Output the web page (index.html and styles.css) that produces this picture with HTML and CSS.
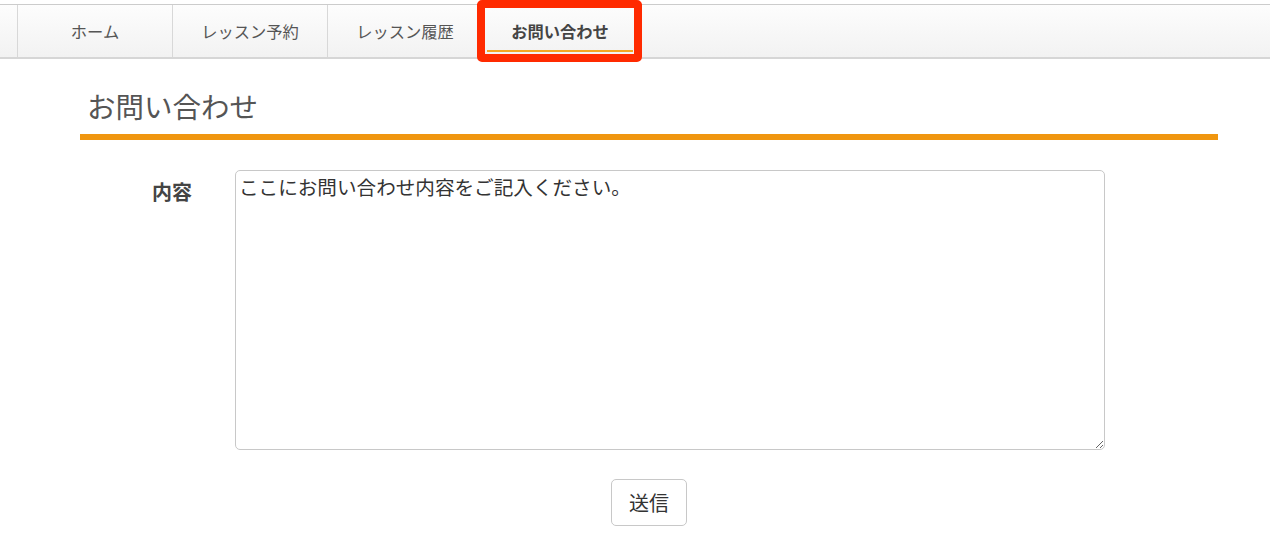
FILE: index.html
```html
<!DOCTYPE html>
<html>
  <head>
    <title>お問い合わせ</title>
    <link rel="stylesheet" href="styles.css">
  </head>
  <body>
    <nav class="nav">
      <ul class="nav-list">
        <li class="nav-item"><a href="#">ホーム</a></li>
        <li class="nav-item"><a href="#">レッスン予約</a></li>
        <li class="nav-item"><a href="#">レッスン履歴</a></li>
        <li class="nav-item active"><a href="#">お問い合わせ</a></li>
      </ul>
    </nav>

    <div class="container">
      <h1 class="page-title">お問い合わせ</h1>

      <form class="contact-form">
        <div class="form-row">
          <label for="content">内容</label>
          <textarea id="content" placeholder="ここにお問い合わせ内容をご記入ください。"></textarea>
        </div>
        <div class="form-actions">
          <button type="submit">送信</button>
        </div>
      </form>
    </div>
  </body>
</html>
```

FILE: styles.css
```css
body {
  margin: 0;
  font-family: "Noto Sans CJK JP", "Liberation Sans", sans-serif;
  color: #555;
  background: #fff;
}
.nav {
  margin-top: 4px;
  height: 52px;
  border-top: 1px solid #ccc;
  border-bottom: 2px solid #d6d6d6;
  background: linear-gradient(#fdfdfd, #f2f2f2);
}
.nav-list {
  list-style: none;
  margin: 0;
  padding: 0 0 0 17px;
  display: flex;
  height: 100%;
}
.nav-item {
  position: relative;
  width: 154px;
  border-left: 1px solid #d8d8d8;
  display: flex;
  align-items: center;
  justify-content: center;
}
.nav-item a {
  color: #555;
  text-decoration: none;
  font-size: 16.3px;
}
.nav-item.active {
  border-left: none;
  width: 146px;
  margin-left: 5px;
}
.nav-item.active a {
  font-weight: bold;
  color: #444;
}
.nav-item.active::before {
  content: "";
  position: absolute;
  left: 0;
  right: 0;
  top: 45px;
  height: 2px;
  background: #f5a623;
}
.nav-item.active::after {
  content: "";
  position: absolute;
  left: -10px;
  right: -9px;
  top: -5px;
  bottom: -5px;
  border: 8px solid #ff2a00;
  border-radius: 5px;
}
.container {
  margin: 0 52px 0 80px;
}
.page-title {
  margin: 0;
  padding: 27px 0 0 7px;
  height: 48px;
  font-size: 28.5px;
  font-weight: normal;
  color: #555;
  border-bottom: 6px solid #f0960f;
  line-height: 40px;
}
.contact-form {
  padding-top: 30px;
}
.form-row {
  display: flex;
  align-items: flex-start;
  padding-left: 72px;
}
.form-row label {
  width: 83px;
  padding-top: 7px;
  font-size: 20px;
  font-weight: bold;
  color: #444;
}
.form-row textarea {
  width: 870px;
  height: 280px;
  box-sizing: border-box;
  border: 1px solid #c8c8c8;
  border-radius: 5px;
  padding: 2px 3px;
  font-family: "Noto Sans CJK JP", sans-serif;
  font-size: 19.6px;
  line-height: 28px;
  color: #333;
  resize: both;
}
.form-row textarea::placeholder {
  color: #333;
}
.form-actions {
  display: flex;
  justify-content: center;
  padding-top: 29px;
}
.form-actions button {
  width: 76px;
  height: 47px;
  background: #fff;
  border: 1px solid #c8c8c8;
  border-radius: 5px;
  font-family: "Noto Sans CJK JP", sans-serif;
  font-size: 20px;
  color: #333;
  cursor: pointer;
}
```
